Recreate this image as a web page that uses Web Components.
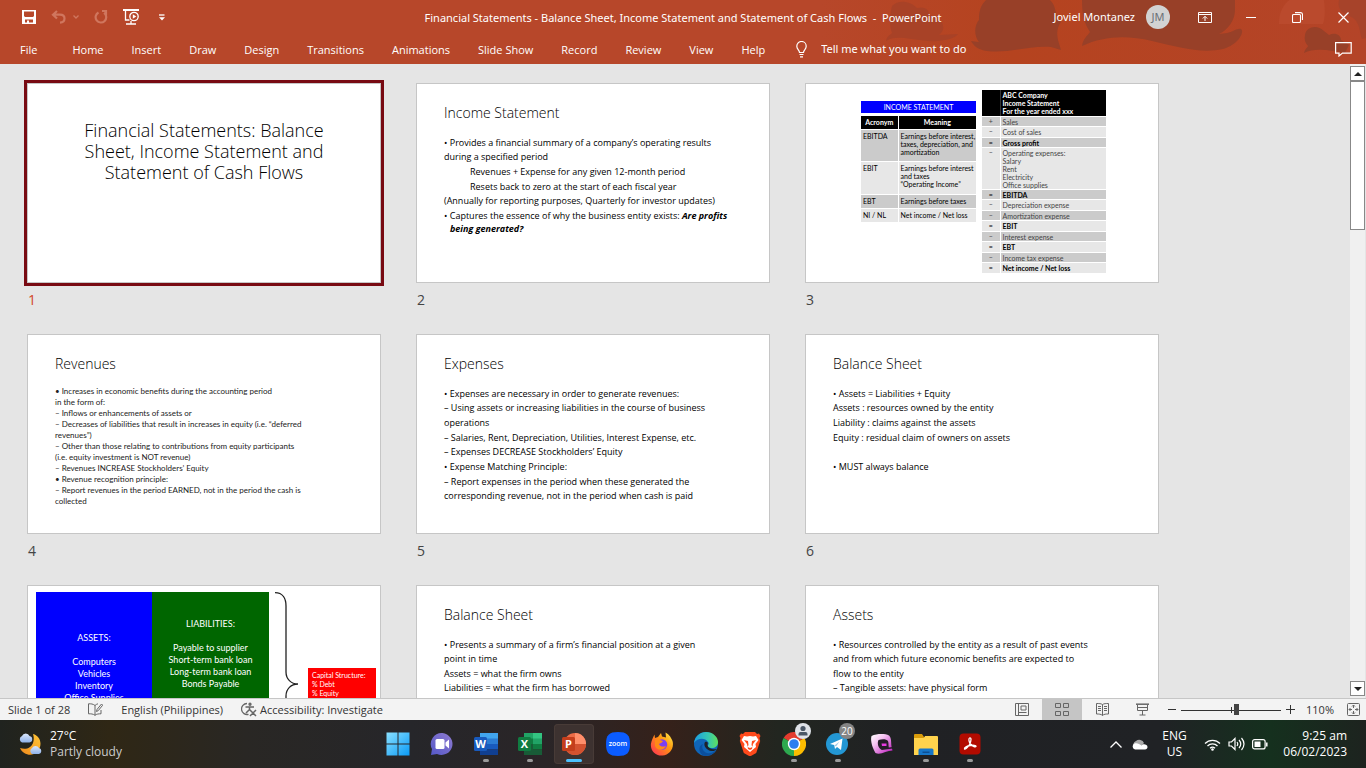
<!DOCTYPE html>
<html lang="en">
<head>
<meta charset="utf-8">
<title>Financial Statements - PowerPoint</title>
<style>
html, body { margin: 0; height: 100%; }
body { font-family: "Open Sans", "Noto Sans", sans-serif; font-size: 11px; line-height: 16px; overflow: hidden; }
</style>
</head>
<body>
<ppt-app></ppt-app>
<script>
const BASE = `*{box-sizing:border-box}button{font:inherit;color:inherit;background:none;border:0;padding:0;margin:0;display:grid;place-items:center;white-space:nowrap}svg{display:block;fill:none;stroke:currentColor}`;
function define(name, css, html) {
  const tpl = document.createElement('template');
  tpl.innerHTML = `<style>${BASE}${css}</style>${html}`;
  customElements.define(name, class extends HTMLElement {
    constructor() {
      super();
      this.attachShadow({ mode: 'open' }).append(tpl.content.cloneNode(true));
    }
    connectedCallback() {
      this.shadowRoot.querySelectorAll('[data-attr]').forEach(el => {
        el.textContent = this.getAttribute(el.dataset.attr) || '';
      });
    }
  });
}

/* ---------- title bar ---------- */
define('title-bar', `
:host{display:grid;grid-template-columns:1fr auto 1fr;height:34px;align-items:center;color:#fff;font-family:"Noto Sans","Open Sans",sans-serif}
.quick{display:flex;align-items:center;padding-left:22px;gap:15px}
.undo{display:flex;align-items:center;gap:7px;color:#d0765e}
.redo{color:#d0765e}
.more{margin-left:4px}
h1{font-size:11px;line-height:16px;font-weight:400;margin:0;white-space:pre;padding-top:2px}
.right{display:flex;justify-content:flex-end;align-items:center;height:31px}
.user{margin-right:11px;white-space:nowrap}
.avatar{width:24px;height:24px;border-radius:50%;background:#d2d2d2;color:#6b6f75;display:grid;place-items:center}
.win{width:46px;height:30px}
.ribbon{margin-left:12px}
`, `
<div class="quick">
<button aria-label="Save"><svg width="14" height="14" style="stroke:none"><path d="M0 0h14v14H0zM2 1.500v4.500l1 1h8l1-1V1.500zM3 9.500V12.500h2v-2h2v2h4v-3z" fill="currentColor" fill-rule="evenodd"/></svg></button>
<div class="undo"><button aria-label="Undo"><svg width="15" height="14" stroke-width="2.200"><path d="M6 1 2 4.700 6 8.500M2 4.700h7c6 0 6 7.500 0 8" /></svg></button>
<button aria-label="Undo list"><svg width="6" height="4" stroke-width="1.300"><path d="m.5.500 2.500 2.500 2.500-2.500"/></svg></button></div>
<button class="redo" aria-label="Repeat"><svg width="14" height="14" stroke-width="2.200"><path d="M4.500 2.500a5.300 5.300 0 1 0 5.500.400M8 1h4v4.500"/></svg></button>
<button aria-label="Start from beginning"><svg width="17" height="16" stroke-width="1.300"><path d="M0 1h16" stroke-width="2"/><path d="M2.500 2v9h4M3 15h10M8 12v3"/><circle cx="11" cy="7.500" r="4.200"/><path d="m9.800 5.300 3.500 2.200-3.500 2.200z" fill="currentColor" stroke="none"/></svg></button>
<button class="more" aria-label="Customize Quick Access Toolbar"><svg width="6" height="7"><path d="M0 1h5.500" stroke-width="1.300"/><path d="M0 3.200h6L3 6.500z" fill="currentColor" stroke="none"/></svg></button>
</div>
<h1>Financial Statements - Balance Sheet, Income Statement and Statement of Cash Flows  -  PowerPoint</h1>
<div class="right">
<span class="user">Joviel Montanez</span><span class="avatar">JM</span>
<button class="win ribbon" aria-label="Ribbon display options"><svg width="14" height="11"><path d="M.5.500h13v10H.5zM.5 2.500h13M7 9V4.500M4.800 6.500 7 4.300l2.200 2.200"/></svg></button>
<button class="win" aria-label="Minimize"><svg width="10" height="1"><path d="M0 .5h10"/></svg></button>
<button class="win" aria-label="Restore"><svg width="11" height="11" stroke-width="1.100"><rect x=".5" y="2.500" width="8" height="8" rx="1"/><path d="M3 .6h5.500q2 0 2 2V8"/></svg></button>
<button class="win" aria-label="Close"><svg width="11" height="11" stroke-width="1.200"><path d="m.5.500 10 10m0-10-10 10"/></svg></button>
</div>`);

/* ---------- ribbon tabs ---------- */
define('ribbon-tabs', `
:host{display:flex;align-items:center;height:30px;padding:0 14px 0 20px;color:#fff;font-size:11px}
nav{display:flex;gap:28px;padding-top:2px}
nav button{height:28px}
.file{margin-right:7px}
label{display:flex;align-items:center;gap:14px;margin-left:31px}
input{font:inherit;font-family:"Noto Sans","Open Sans",sans-serif;background:none;border:0;padding:0;width:180px;color:#fff;outline:0}
input::placeholder{color:#fff;opacity:1}
.comment{margin-left:auto}
`, `
<nav><button class="file">File</button><button>Home</button><button>Insert</button><button>Draw</button><button>Design</button><button>Transitions</button><button>Animations</button><button>Slide Show</button><button>Record</button><button>Review</button><button>View</button><button>Help</button></nav>
<label><svg width="11" height="17" stroke-width="1.200" aria-hidden="true"><path d="M3.500 11.500C3.500 9 .8 8.500.8 5.200a4.700 4.700 0 0 1 9.400 0c0 3.300-2.700 3.800-2.700 6.300zM3.500 13.500h4M4 15.800h3"/></svg><input type="text" placeholder="Tell me what you want to do" aria-label="Tell me what you want to do"></label>
<button class="comment" aria-label="Comments"><svg width="17" height="15" stroke-width="1.200"><path d="M.6.600h15.600v10.500H7.500L4 14v-2.900H.6z"/></svg></button>`);

define('app-header', `
:host{display:grid;background:#b7472a;height:64px;flex:none}
svg,.bars{grid-area:1/1}
svg{justify-self:end;stroke:none}
.bars{position:relative}
`, `
<svg width="546" height="64" viewBox="0 0 546 64" aria-hidden="true">
<defs><linearGradient id="fade"><stop offset="0" stop-color="#b7472a"/><stop offset=".35" stop-color="#b5431f"/><stop offset="1" stop-color="#b44428"/></linearGradient></defs>
<path d="M0 0h546v64H0z" fill="url(#fade)"/>
<path d="M72 6C78-1 91 1 97 8c8-2 12 2 12 6l13 8c3 8 0 10-3 13l19-1c-3 5-18 8-30 7-20-2-33-6-42 0 1-5 3-5 6-8-3-8-2-19 0-27z" fill="#a84227"/>
<path d="M166 0h64c7 6 4 15 11 22-6 8-3 16-3 18l3 10-10-3c-20-2-43 7-64 4-9-1-14-6-16-10l8 1c-6-7-4-18 0-22 0-8 1-14 7-20z" fill="#984028"/>
<path d="M262 0h153v10c0 10-7 20-16 24l8-1c6-1 10-5 14-4 4 3-3 16-18 20-22 5-45-2-71-8-26-6-48-5-70 5 1-7 5-10 8-14-6-9-8-18-8-32z" fill="#984028"/>
<path d="M459 24C459-8 490-6 490-6h13s4 20 0 30z" fill="#ba4a2d"/>
<path d="M485 35c1-8 12-11 19-4l5 4c6-3 12 0 12 5l8 5-4 8c-12-2-30-6-41 0 1-4 3-5 4-7-3-3-4-7-3-11z" fill="#984028"/>
<path d="M519 0h27v38l-4 1c-3-9-2-19-13-23-8-4-12-8-10-16z" fill="#a7432a"/>
</svg>
<div class="bars"><title-bar></title-bar><ribbon-tabs></ribbon-tabs></div>`);

/* ---------- slide thumbnails ---------- */
define('slide-card', `
:host{display:block;width:354px}
.thumb{height:200px;background:#fff;border:1px solid #c6c6c6;overflow:hidden;color:#000;font-family:Lato,"Open Sans",sans-serif}
:host([selected]) .thumb{outline:3px solid #780a12}
.num{font:14px/20px "Open Sans","Noto Sans",sans-serif;color:#444;margin:7px 0 24px 1px}
:host([selected]) .num{color:#d24726}
`, `<div class="thumb"><slot></slot></div><div class="num" data-attr="number"></div>`);

define('slide-title', `
:host{display:block;padding-top:36px;text-align:center;font-family:"Open Sans";font-weight:300;font-size:18px;line-height:21px;white-space:nowrap}
h2{font:inherit;margin:0}
`, `<h2><slot></slot></h2>`);

define('slide-text', `
:host{display:block;padding:19px 27px;font-family:"Open Sans",sans-serif;font-size:9px;line-height:11px;white-space:nowrap}
:host([dense]){font-family:Lato,sans-serif;font-size:8px;color:#222}
h2{font:300 14px/20px "Open Sans",sans-serif;color:#000;margin:0}
.lines{display:grid;grid-auto-rows:1fr;height:117px;align-items:center;margin-top:12px}
:host([dense]) .lines{height:120px}
:host([rows="6"]) .lines{height:88px}
:host([rows="4"]) .lines{height:58px}
::slotted(p){margin:0}
::slotted(.in){padding-left:26px}
::slotted(.hang){padding-left:6px;align-self:start}
`, `<h2 data-attr="heading"></h2><div class="lines"><slot></slot></div>`);

define('income-tables', `
:host{display:flex;align-items:flex-start;gap:6px;padding:6px 0 0 55px;font-size:7px;line-height:8px;white-space:nowrap}
.left{width:115px;margin-top:11px}
.banner{background:#00f;color:#fff;text-align:center;height:12px;line-height:12px;margin-bottom:3px}
table{border-collapse:collapse;width:100%;table-layout:fixed}
td,th{padding:0 0 0 2px;vertical-align:top;text-align:left;border-bottom:1px solid #fff;font-weight:400}
td+td,th+th{border-left:1px solid #fff}
tr:nth-child(odd) td{background:#cbcbcb}tr:nth-child(even) td{background:#e7e7e7}
thead th{background:#000;color:#fff;font-weight:700}
.a th{text-align:center;padding:0;height:13px;vertical-align:middle}
.a td{padding-top:2px}
.a col:first-child{width:37px}
.b{width:124px;color:#444}
.b col:first-child{width:18px}
.b td:first-child{text-align:center;padding:0}
.b td{padding-top:1px;height:10px}
.b tr:nth-child(even) td{height:11px}
.b th{padding:1px 0 0 2px;height:26px}
.b th+th{border-left-color:#333}
b{color:#000}
`, `
<div class="left"><div class="banner">INCOME STATEMENT</div>
<table class="a"><colgroup><col><col></colgroup><thead><tr><th>Acronym</th><th>Meaning</th></tr></thead>
<tbody><tr style="height:32px"><td>EBITDA</td><td>Earnings before interest,<br>taxes, depreciation, and<br>amortization</td></tr>
<tr style="height:33px"><td>EBIT</td><td>Earnings before interest<br>and taxes<br>“Operating Income”</td></tr>
<tr style="height:14px"><td>EBT</td><td>Earnings before taxes</td></tr>
<tr style="height:14px"><td>NI / NL</td><td>Net income / Net loss</td></tr></tbody></table></div>
<table class="b"><colgroup><col><col></colgroup><thead><tr><th></th><th>ABC Company<br>Income Statement<br>For the year ended xxx</th></tr></thead>
<tbody><tr><td>+</td><td>Sales</td></tr>
<tr><td>–</td><td>Cost of sales</td></tr>
<tr><td><b>=</b></td><td><b>Gross profit</b></td></tr>
<tr><td>–</td><td>Operating expenses:<br>Salary<br>Rent<br>Electricity<br>Office supplies</td></tr>
<tr><td><b>=</b></td><td><b>EBITDA</b></td></tr>
<tr><td>–</td><td>Depreciation expense</td></tr>
<tr><td>–</td><td>Amortization expense</td></tr>
<tr><td><b>=</b></td><td><b>EBIT</b></td></tr>
<tr><td>–</td><td>Interest expense</td></tr>
<tr><td><b>=</b></td><td><b>EBT</b></td></tr>
<tr><td>–</td><td>Income tax expense</td></tr>
<tr><td><b>=</b></td><td><b>Net income / Net loss</b></td></tr></tbody></table>`);

define('capital-chart', `
:host{display:flex;align-items:flex-start;padding:6px 0 0 8px;white-space:nowrap}
.box{width:117px;height:190px;color:#fff;text-align:center;font-size:9px;line-height:12px}
.box p{margin:0 0 12px}
.assets{background:#00f;padding-top:40px;width:116px}
.liab{background:#060;padding-top:26px}
svg{margin-left:5px;stroke:#222}
.cap{width:68px;height:40px;margin:76px 0 0 8px;background:#f00;color:#fff;font-size:7px;line-height:9px;padding:3px 4px}
`, `
<div class="box assets"><p>ASSETS:</p>Computers<br>Vehicles<br>Inventory<br>Office Supplies</div>
<div class="box liab"><p>LIABILITIES:</p>Payable to supplier<br>Short-term bank loan<br>Long-term bank loan<br>Bonds Payable</div>
<svg width="26" height="184" stroke-width="1.300" aria-hidden="true"><path d="M1 .7C9 .7 12 7 12 14v66c0 7 5 12 12 12-7 0-12 5-12 12v66c0 7-3 13-11 13"/></svg>
<div class="cap">Capital Structure:<br>% Debt<br>% Equity</div>`);

define('side-scroll', `
:host{display:flex;flex-direction:column;width:15px;padding:2px 0 2px;margin-right:1px;flex:none;color:#222;background:#f0f0f0}
button{height:15px;border:1px solid #888;background:#fff;flex:none}
.thumb{height:149px;border:1px solid #888;background:#fff}
.track{flex:1}
svg{fill:currentColor;stroke:none}
`, `<button aria-label="Scroll up"><svg width="8" height="4"><path d="M0 4h8L4 0z"/></svg></button><div class="track"><div class="thumb"></div></div><button aria-label="Scroll down"><svg width="8" height="4"><path d="M0 0h8L4 4z"/></svg></button>`);

define('slide-sorter', `
:host{display:flex;flex:1;min-height:0;background:#e5e5e5}
main{flex:1;overflow:hidden;display:grid;grid-template-columns:repeat(auto-fill,354px);column-gap:35px;align-content:start;padding:19px 0 0 27px}
`, `
<main>
<slide-card number="1" selected><slide-title>Financial Statements: Balance<br>Sheet, Income Statement and<br>Statement of Cash Flows</slide-title></slide-card>
<slide-card number="2"><slide-text heading="Income Statement"><p>• Provides a financial summary of a company’s operating results</p><p>during a specified period</p><p class="in">Revenues + Expense for any given 12-month period</p><p class="in">Resets back to zero at the start of each fiscal year</p><p>(Annually for reporting purposes, Quarterly for investor updates)</p><p>• Captures the essence of why the business entity exists: <b><i>Are profits</i></b></p><p class="hang"><b><i>being generated?</i></b></p><p></p></slide-text></slide-card>
<slide-card number="3"><income-tables></income-tables></slide-card>
<slide-card number="4"><slide-text dense heading="Revenues"><p>• Increases in economic benefits during the accounting period</p><p>in the form of:</p><p>– Inflows or enhancements of assets or</p><p>– Decreases of liabilities that result in increases in equity (i.e. “deferred</p><p>revenues”)</p><p>– Other than those relating to contributions from equity participants</p><p>(i.e. equity investment is NOT revenue)</p><p>– Revenues INCREASE Stockholders’ Equity</p><p>• Revenue recognition principle:</p><p>– Report revenues in the period EARNED, not in the period the cash is</p><p>collected</p></slide-text></slide-card>
<slide-card number="5"><slide-text heading="Expenses"><p>• Expenses are necessary in order to generate revenues:</p><p>– Using assets or increasing liabilities in the course of business</p><p>operations</p><p>– Salaries, Rent, Depreciation, Utilities, Interest Expense, etc.</p><p>– Expenses DECREASE Stockholders’ Equity</p><p>• Expense Matching Principle:</p><p>– Report expenses in the period when these generated the</p><p>corresponding revenue, not in the period when cash is paid</p></slide-text></slide-card>
<slide-card number="6"><slide-text rows="6" heading="Balance Sheet"><p>• Assets = Liabilities + Equity</p><p>Assets : resources owned by the entity</p><p>Liability : claims against the assets</p><p>Equity : residual claim of owners on assets</p><p></p><p>• MUST always balance</p></slide-text></slide-card>
<slide-card><capital-chart></capital-chart></slide-card>
<slide-card><slide-text rows="4" heading="Balance Sheet"><p>• Presents a summary of a firm’s financial position at a given</p><p>point in time</p><p>Assets = what the firm owns</p><p>Liabilities = what the firm has borrowed</p></slide-text></slide-card>
<slide-card><slide-text rows="4" heading="Assets"><p>• Resources controlled by the entity as a result of past events</p><p>and from which future economic benefits are expected to</p><p>flow to the entity</p><p>– Tangible assets: have physical form</p></slide-text></slide-card>
</main>
<side-scroll></side-scroll>`);

/* ---------- status bar ---------- */
define('status-bar', `
:host{display:flex;justify-content:space-between;align-items:center;height:22px;flex:none;background:#f3f3f3;border-top:1px solid #c6c6c6;color:#333;font-size:11px;white-space:nowrap}
.l,.r{display:flex;align-items:center;height:100%}
.l{padding-left:8px;gap:18px}
.acc{display:flex;gap:2px;align-items:center}
svg{color:#666}
.view{width:40px;height:21px}
.on{background:#c5c5c5}
.zoom{display:flex;align-items:center;gap:5px;margin:0 11px 0 6px}
.zoom svg{color:#333}
input{appearance:none;width:100px;height:12px;margin:0;background:linear-gradient(#333,#333) 50px 3px/1px 6px no-repeat,linear-gradient(#333,#333) 0 6px/100% 1px no-repeat}
input::-webkit-slider-thumb{appearance:none;width:5px;height:11px;background:#444}
.fit{margin:0 6px 0 13px}
`, `
<div class="l"><span>Slide 1 of 28</span>
<button aria-label="Spelling"><svg width="15" height="13"><path d="M7 2.500C5 .8 3 .8.500.800v10c2.500 0 4.500 0 6.500 1.500V2.500c1-1 2-1.500 3-1.700M7 12.300c1.500-1.400 4-1.500 6-1.500V7"/><path d="m8.500 8.500.5-2L13.500 1l1.200 1.200-4.500 5.500z"/></svg></button>
<button>English (Philippines)</button>
<button class="acc"><svg width="17" height="15" stroke-width="1.300"><path d="M6 1.500a5.500 5.500 0 1 0 1.500 10.800"/><path d="M9 1.500v2M4.500 5H13M8.500 5.500v3M5 11l3-3 M9 8l6 6m0-6-6 6" stroke-width="1.500"/><circle cx="9" cy="2.200" r="1"/></svg><span>Accessibility: Investigate</span></button></div>
<div class="r">
<button class="view" aria-label="Normal"><svg width="14" height="13"><path d="M.5.500h13v12H.5zM3.500.500v12M6 3h5v4H6zM3.500 9.500h8" /></svg></button>
<button class="view on" aria-label="Slide Sorter"><svg width="14" height="13"><path d="M.5.500h5v4h-5zM8.500.500h5v4h-5zM.5 8.500h5v4h-5zM8.500 8.500h5v4h-5z"/></svg></button>
<button class="view" aria-label="Reading View"><svg width="13" height="13"><path d="M6.500 1.500C5 .5 3 .500.500.500v10.500c2.500 0 4.500 0 6 1.500 1.500-1.500 3.500-1.500 6-1.500V.5c-2.500 0-4.500 0-6 1zM6.500 1.500v11M2 3.500h3M2 5.500h3M2 7.500h3M8 3.500h3M8 5.500h3M8 7.500h3"/></svg></button>
<button class="view" aria-label="Slide Show"><svg width="13" height="13"><path d="M0 1.200h13" stroke-width="1.500"/><path d="M1.500 2v5.500h10V2M6.500 7.500V12M3.500 12h6M1.500 4.500h10"/></svg></button>
<div class="zoom"><button aria-label="Zoom out"><svg width="8" height="9"><path d="M0 4.500h8"/></svg></button><input type="range" min="0" max="100" value="56" aria-label="Zoom"><button aria-label="Zoom in"><svg width="9" height="9"><path d="M0 4.500h9M4.500 0v9"/></svg></button></div>
<button>110%</button>
<button class="fit" aria-label="Fit to window"><svg width="13" height="13"><rect x=".5" y=".5" width="12" height="12" rx="1"/><path d="M6.500 2v3M6.500 8v3M2 6.500h3M8 6.500h3M5 3.500l1.500-1.500L8 3.500M5 9.500 6.500 11 8 9.500M3.500 5 2 6.500 3.500 8M9.500 5 11 6.500 9.500 8"/></svg></button>
</div>`);

/* ---------- taskbar ---------- */
define('task-icon', `
:host{display:block;width:44px;height:48px;flex:none}
button{position:relative;width:40px;height:40px;margin:4px 2px;border-radius:4px}
:host([active]) button{background:#3d3230;box-shadow:inset 0 0 0 1px #483b37}
i{position:absolute;left:17px;bottom:2px;width:6px;height:3px;border-radius:2px;background:#9a9a9a;display:none}
:host([running]) i{display:block}
:host([active]) i{display:block;left:12px;width:16px;background:#4cc2ff}
`, `<button><slot></slot><i></i></button>`);
define('task-badge', `
:host{position:absolute;right:3px;top:-1px;width:16px;height:16px;border-radius:50%;background:#858585;color:#fff;font-size:10px;line-height:16px;text-align:center}
:host([person]){background:#dfe3e8}
`, `<slot></slot>`);

const I = (name, attrs, svg, extra = '') => `<task-icon ${attrs} title="${name}"><svg width="24" height="24" viewBox="0 0 24 24" style="stroke:none">${svg}</svg>${extra}</task-icon>`;
const office = (c, l, x) => `${x}<rect x="0" y="5" width="13" height="14" rx="1.500" fill="${c}"/><text x="6.500" y="16" fill="#fff" font-family="Open Sans" font-weight="700" font-size="11" text-anchor="middle">${l}</text>`;

define('task-bar', `
:host{display:grid;grid-template-columns:1fr auto 1fr;height:48px;flex:none;color:#fff;font-size:12px;line-height:16px;white-space:nowrap;background:linear-gradient(90deg,#20231f,#2f2715 8%,#292724 18%,#26262a 30%,#2a2527 40%,#35211a 49%,#222620 57%,#202124 66%,#202225 85%,#15301e 93%,#1d231f)}
.weather{display:flex;align-items:center;gap:7px;padding-left:18px;justify-self:start;text-align:left}
.weather p{margin:0}
.weather p+p{color:#ccc}
.apps{display:flex;padding-left:2px}
.tray{display:flex;justify-content:flex-end;align-items:center;padding-right:19px}
.lang{width:24px;text-align:center;margin:0 18px 0 14px}
.sys{display:flex;gap:7px;align-items:center}
.clock{text-align:right;margin-left:15px}
.cloud{margin-left:9px}
button svg{stroke:currentColor}
`, `
<button class="weather"><svg width="25" height="24" style="stroke:none"><defs><linearGradient id="mo" x1="1" y1="0" x2="0" y2="1"><stop stop-color="#ffc637"/><stop offset="1" stop-color="#f08a1d"/></linearGradient><linearGradient id="cl" x1="0" y1="0" x2="0" y2="1"><stop stop-color="#dbe7fb"/><stop offset="1" stop-color="#8fb2ea"/></linearGradient></defs><path d="M15 2c8 2 10 12 4 18-5 5-14 3-17-4 6 2 11 0 13-5 1-3 1-6 0-9z" fill="url(#mo)"/><path d="M4 10.500a3.500 3.500 0 0 1 0-6.500 4 4 0 0 1 7.500 0 3.300 3.300 0 0 1 0 6.500z" fill="url(#cl)"/><path d="M14 22a3.500 3.500 0 0 1 0-6 4 4 0 0 1 7 0 3.100 3.100 0 0 1 0 6z" fill="url(#cl)"/></svg><div><p>27°C</p><p>Partly cloudy</p></div></button>
<div class="apps">
${I('Start', '', `<defs><linearGradient id="w" x2="1" y2="1"><stop stop-color="#8ae0ff"/><stop offset="1" stop-color="#0a9af5"/></linearGradient></defs><path d="M.5.500h11v11H.5zM12.500.500h11v11h-11zM.5 12.500h11v11H.5zM12.500 12.500h11v11h-11z" fill="url(#w)"/>`)}
${I('Chat', '', `<defs><linearGradient id="c" x1="1" y2="1" x2="0"><stop stop-color="#8f7bd0"/><stop offset="1" stop-color="#5558c8"/></linearGradient></defs><path d="M12.500 1A11 11 0 1 1 7 22L1 23l1-6A11 11 0 0 1 12.500 1z" fill="url(#c)"/><rect x="5.500" y="7" width="9" height="10" rx="1.500" fill="#fff"/><path d="m15.500 10.500 3.500-3v9l-3.500-3z" fill="#fff"/>`)}
${I('Word', 'running', office('#185abd', 'W', '<path d="M6 1h18v6H6z" fill="#41a5ee"/><path d="M6 6.500h18V12H6z" fill="#2b7cd3"/><path d="M6 12h18v5.500H6z" fill="#185abd"/><path d="M6 17.500h18V23H6z" fill="#103f91"/>'))}
${I('Excel', 'running', office('#107c41', 'X', '<path d="M6 1h9v6H6z" fill="#21a366"/><path d="M15 1h9v6h-9z" fill="#33c481"/><path d="M6 6.500h9V12H6z" fill="#107c41"/><path d="M15 6.500h9V12h-9z" fill="#21a366"/><path d="M6 12h9v11H6z" fill="#185c37"/><path d="M15 12h9v5.500h-9z" fill="#107c41"/><path d="M15 17.500h9V23h-9z" fill="#185c37"/>'))}
${I('PowerPoint', 'active', office('#c43e1c', 'P', '<circle cx="13" cy="12" r="11" fill="#ed6c47"/><path d="M13 1a11 11 0 0 1 11 11H13z" fill="#ff8f6b"/><path d="M2 12h22a11 11 0 0 1-22 0z" fill="#d35230"/>'))}
${I('Zoom', '', `<path d="M12 0c9 0 12 3 12 12s-3 12-12 12S0 21 0 12 3 0 12 0z" fill="#0b5cff"/><text x="12" y="14" fill="#fff" font-family="Open Sans" font-weight="600" font-size="7" text-anchor="middle">zoom</text>`)}
${I('Firefox', '', `<defs><linearGradient id="f" x1="1" y1="0" x2="0" y2="1"><stop stop-color="#fff44f"/><stop offset=".4" stop-color="#ff980e"/><stop offset="1" stop-color="#ff2a5a"/></linearGradient></defs><path d="M4.500 2.500 5 6l3-1 3-4 1 3.500 4 1L15.500.500c4 2 6 6 7 8.500 2 7-3 14-10 14.500C5 24 0 18 1 11.500c.5-3 2-6 3.500-9z" fill="url(#f)"/><circle cx="12" cy="12.500" r="5.200" fill="#7b3ff2"/><path d="M5 8c3-2 5 0 8 1-1 2-3 2-4 3 1 3 5 3 7 2-2 5-9 5-11 0z" fill="#ff8a16"/>`)}
${I('Edge', '', `<defs><linearGradient id="e1" x2="1"><stop stop-color="#1b9de2"/><stop offset=".6" stop-color="#36c7b0"/><stop offset="1" stop-color="#5fe05c"/></linearGradient></defs><circle cx="12" cy="12" r="12" fill="#0f65b8"/><path d="M0 11C1 4 6 0 12 0c7 0 12 5 12 10 0 4-3 6-6 6-3 0-5-1-4-3 1-1 1-2 0-3C11 5 3 6 0 11z" fill="url(#e1)"/><path d="M9 12c-2 3 0 8 4 9 4 1 7-1 9-3-1 3-6 6-11 6-6-1-8-10-2-12z" fill="#0b4f9e"/><path d="M11 10c-2 3 1 8 6 9 3 .5 5-1 6-2-5 1-9-1-9.500-4 .5-2 .5-4-2.500-3z" fill="#1e2228"/>`)}
${I('Brave', '', `<path d="M7 0h10l2 2 2-.5L22.500 4l-1 2 .7 3-4 12-6.200 3.500L5.800 21l-4-12 .7-3-1-2L3 1.500 5 2z" fill="#ff4a1c"/><path d="m12 4 3 .5 3-.5 2.500 4-3 4 .5 3-6 5-6-5 .5-3-3-4L6 4l3 .5z" fill="#fff"/><path d="m6 8 4 1 .5 4-1 2 2.500 1 2.500-1-1-2L14 9l4-1-3 4-1 5-2 1-2-1-1-5z" fill="#ff4a1c"/><path d="m11 6h2v9h-2z" fill="#fff"/>`)}
${I('Chrome', 'running', `<path d="M12 12 1.600 6A12 12 0 0 1 22.400 6z" fill="#e33b2e"/><path d="M12 12 22.400 6A12 12 0 0 1 12 24z" fill="#fdbd00"/><path d="M12 12v12A12 12 0 0 1 1.600 6z" fill="#2da94f"/><circle cx="12" cy="12" r="6.200" fill="#fff"/><circle cx="12" cy="12" r="4.800" fill="#2d7df0"/>`, `<task-badge person><svg width="16" height="16" style="display:block;stroke:none"><circle cx="8" cy="5.500" r="2.600" fill="#4a5766"/><path d="M3.500 12.500V11q0-2 2-2h5q2 0 2 2v1.500z" fill="#4a5766"/></svg></task-badge>`)}
${I('Telegram', 'running', `<circle cx="11" cy="12" r="11" fill="#2397d4"/><path d="m4 12 12.500-5.500L15 18l-4-3-2 2-.8-4z" fill="#fff"/><path d="m8.500 13.500 5-4-3.500 5z" fill="#9cc9e6"/>`, `<task-badge>20</task-badge>`)}
${I('Messenger', '', `<defs><linearGradient id="g" x2="1" y2="1"><stop stop-color="#fff"/><stop offset=".35" stop-color="#f6c4f2"/><stop offset="1" stop-color="#b80cb8"/></linearGradient></defs><path d="M1.500 4C7 1.500 15 1.500 19 3.500c2.500 2.500 2 6 2.500 11l1 4c-6 0-12 5-17 2.500C3 17 0 9 1.500 4z" fill="url(#g)"/><path d="M8.500 8c4-1.500 8-1 9.500 1 .8 2 .3 4 .8 6.500l4-.5v1.500l-11 1.500C8 16 7 11 8.500 8z" fill="#241c28"/><path d="M11.500 11.500h5v2.500h-4.500z" fill="#e63be0"/>`)}
${I('File Explorer', 'running', `<path d="M0 3q0-1 1-1h7l2 3h14v4H0z" fill="#d99b0a"/><path d="M0 6h10l1-2h12q1 0 1 1v18H0z" fill="#ffd34d"/><path d="M4.500 23v-5q0-1.500 1.500-1.500h12q1.500 0 1.500 1.500v5z" fill="#1676c9"/><path d="M8.500 19.500h7v1.500h-7z" fill="#0c4f94"/>`)}
${I('Acrobat', 'running', `<rect x="1.500" y="1.500" width="21" height="21" rx="4" fill="#b30b00"/><path d="M11.500 6c2-1 2 3 0 6.500-2 3.500-4.500 5-5 4.500-.8-1.500 3-3 5.500-3.500 3-.5 6.500-.3 6 1-.7 1.200-4-.5-5.500-2.500-1.500-2-2.200-5.300-1-6z" fill="none" stroke="#fff" stroke-width="1.300"/>`)}
</div>
<div class="tray">
<button aria-label="Show hidden icons"><svg width="12" height="7" stroke-width="1.300"><path d="m.5 6.500 5.500-5.500 5.500 5.500"/></svg></button>
<button class="cloud" aria-label="OneDrive"><svg width="17" height="12" style="stroke:none"><path d="M3 9a4 4 0 0 1 2-6 5 5 0 0 1 8 2l-4 4z" fill="#aaa"/><path d="M4 11.500a3.200 3.200 0 0 1-.5-6c3-1 5 1 7 2 1-2 6-1.500 6 1.500 0 1.500-1 2.500-2.500 2.500z" fill="#fff"/></svg></button>
<button class="lang"><span>ENG<br>US</span></button>
<button class="sys" aria-label="Network, volume, battery"><svg width="17" height="13" stroke-width="1.300"><path d="M1 5.500a10.500 10.500 0 0 1 15 0M3.500 8a7 7 0 0 1 10 0M6 10.300a3.600 3.600 0 0 1 5 0"/><circle cx="8.500" cy="11.500" r="1.300" fill="currentColor" stroke="none"/></svg><svg width="17" height="14" stroke-width="1.200"><path d="M1 5h2.500L7 1.500v11L3.500 9H1zM9 5q1.500 2 0 4M11 3q3.500 4 0 8M13.500 1q5 6 0 12"/></svg><svg width="16" height="11" stroke-width="1.200"><rect x=".6" y=".6" width="12.500" height="9.300" rx="2"/><path d="M14.800 3.500v4" stroke-width="1.500"/><path d="M2.500 2.500h6V8h-6z" fill="currentColor" stroke="none"/></svg></button>
<button class="clock"><span>9:25 am<br>06/02/2023</span></button>
</div>`);

define('ppt-app', `:host{display:flex;flex-direction:column;height:100vh;overflow:hidden}`,
`<app-header></app-header><slide-sorter></slide-sorter><status-bar></status-bar><task-bar></task-bar>`);
</script>
</body>
</html>
